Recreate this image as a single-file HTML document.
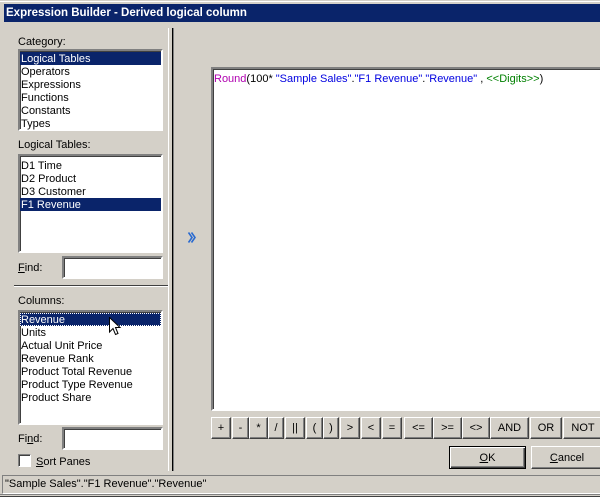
<!DOCTYPE html>
<html><head><style>
*{box-sizing:border-box;margin:0;padding:0}
body{width:600px;height:497px;background:#d4d0c8;font-family:"Liberation Sans",Arial,sans-serif;font-size:11px;position:relative;overflow:hidden;color:#000}
.a{position:absolute}
.title{left:4px;top:4px;width:596px;height:18px;background:#0a246a;color:#fff;font-weight:bold;font-size:11.5px;line-height:18px;padding-left:2px}
.lb{background:#fff;border:2px solid;border-color:#808080 #fff #fff #808080;box-shadow:inset 1px 1px 0 #404040}
.lb div{height:13px;line-height:14px;padding-left:1px;white-space:nowrap}
.sel{background:#0a246a;color:#fff}
.inp{background:#fff;border:2px solid;border-color:#808080 #fff #fff #808080;box-shadow:inset 1px 1px 0 #404040}
.btn{position:absolute;top:417px;height:22px;border:1px solid;border-color:#fff #404040 #404040 #fff;box-shadow:inset -1px -1px 0 #808080;text-align:center;line-height:21px;font-size:11px}
u{text-decoration:underline}
</style></head><body>
<div class="a" style="left:0;top:0;width:600px;height:2px;border-top:1px solid #d4d0c8;border-bottom:1px solid #fff"></div>
<div class="a title">Expression Builder - Derived logical column</div>

<div class="a" style="left:18px;top:36px">Category:</div>
<div class="a lb" style="left:18px;top:49px;width:145px;height:82px;padding-top:1px">
<div class="sel">Logical Tables</div><div>Operators</div><div>Expressions</div><div>Functions</div><div>Constants</div><div>Types</div></div>

<div class="a" style="left:18px;top:139px">Logical Tables:</div>
<div class="a lb" style="left:18px;top:154px;width:145px;height:99px;padding-top:3px">
<div>D1 Time</div><div>D2 Product</div><div>D3 Customer</div><div class="sel">F1 Revenue</div></div>

<div class="a" style="left:18px;top:262px"><u>F</u>ind:</div>
<div class="a inp" style="left:62px;top:256px;width:101px;height:23px"></div>

<div class="a" style="left:14px;top:285px;width:154px;height:2px;border-top:1px solid #404040;border-bottom:1px solid #fff"></div>

<div class="a" style="left:18px;top:295px">Columns:</div>
<div class="a lb" style="left:18px;top:310px;width:145px;height:115px;padding-top:1px">
<div class="sel" style="outline:1px dotted #fff;outline-offset:-1px">Revenue</div><div>Units</div><div>Actual Unit Price</div><div>Revenue Rank</div><div>Product Total Revenue</div><div>Product Type Revenue</div><div>Product Share</div></div>
<svg class="a" style="left:109px;top:317px" width="14" height="20" viewBox="0 0 14 20"><path d="M0.5 0.5 L0.5 15 L4 11.5 L6.5 17.5 L9 16.5 L6.5 10.5 L11 10.5 Z" fill="#fff" stroke="#000"/></svg>

<div class="a" style="left:18px;top:433px">Fi<u>n</u>d:</div>
<div class="a inp" style="left:62px;top:427px;width:101px;height:23px"></div>

<div class="a" style="left:18px;top:454px;width:13px;height:13px;background:#fff;border:1px solid;border-color:#808080 #fff #fff #808080;box-shadow:inset 1px 1px 0 #404040"></div>
<div class="a" style="left:36px;top:456px"><u>S</u>ort Panes</div>

<div class="a" style="left:172px;top:28px;width:2px;height:443px;background:#000;border-right:1px solid #808080"></div>
<div class="a" style="left:168px;top:28px;width:1px;height:443px;background:#fff"></div>

<svg class="a" style="left:187px;top:231px" width="10" height="13" viewBox="0 0 10 13"><path d="M1.5 1.5 L5 6.5 L1.5 11.5 M4.5 1.5 L8 6.5 L4.5 11.5" fill="none" stroke="#2a6ad0" stroke-width="1.6"/></svg>

<div class="a" style="left:211px;top:67px;width:392px;height:344px;background:#fff;border:2px solid;border-color:#808080 #fff #fff #808080;box-shadow:inset 1px 1px 0 #404040;padding:4px 0 0 1px;white-space:nowrap"><span style="color:#b000b0">Round</span>(100* <span style="color:#0000e0">"Sample Sales"</span>.<span style="color:#0000e0">"F1 Revenue"</span>.<span style="color:#0000e0">"Revenue"</span> , <span style="color:#008000">&lt;&lt;Digits&gt;&gt;</span>)</div>

<div class="btn" style="left:211px;width:20px">+</div>
<div class="btn" style="left:232px;width:17px">-</div>
<div class="btn" style="left:249px;width:19px">*</div>
<div class="btn" style="left:268px;width:16px">/</div>
<div class="btn" style="left:285px;width:20px">||</div>
<div class="btn" style="left:306px;width:17px">(</div>
<div class="btn" style="left:323px;width:16px">)</div>
<div class="btn" style="left:340px;width:20px">&gt;</div>
<div class="btn" style="left:361px;width:20px">&lt;</div>
<div class="btn" style="left:382px;width:20px">=</div>
<div class="btn" style="left:404px;width:29px">&lt;=</div>
<div class="btn" style="left:433px;width:29px">&gt;=</div>
<div class="btn" style="left:462px;width:28px">&lt;&gt;</div>
<div class="btn" style="left:490px;width:39px">AND</div>
<div class="btn" style="left:530px;width:32px">OR</div>
<div class="btn" style="left:563px;width:40px">NOT</div>

<div class="btn" style="left:449px;top:446px;width:77px;height:23px;border:1px solid #000;box-shadow:inset 1px 1px 0 #fff,inset -1px -1px 0 #404040,inset -2px -2px 0 #808080;line-height:22px"><u>O</u>K</div>
<div class="btn" style="left:531px;top:446px;width:72px;height:23px;line-height:22px"><u>C</u>ancel</div>

<div class="a" style="left:2px;top:475px;width:600px;height:19px;border:1px solid;border-color:#808080 #fff #fff #808080;padding-left:2px;line-height:17px">"Sample Sales"."F1 Revenue"."Revenue"</div>
<div class="a" style="left:0;top:494px;width:600px;height:3px;border-top:1px solid #808080;background:#d4d0c8;border-bottom:1px solid #404040"></div>
</body></html>
